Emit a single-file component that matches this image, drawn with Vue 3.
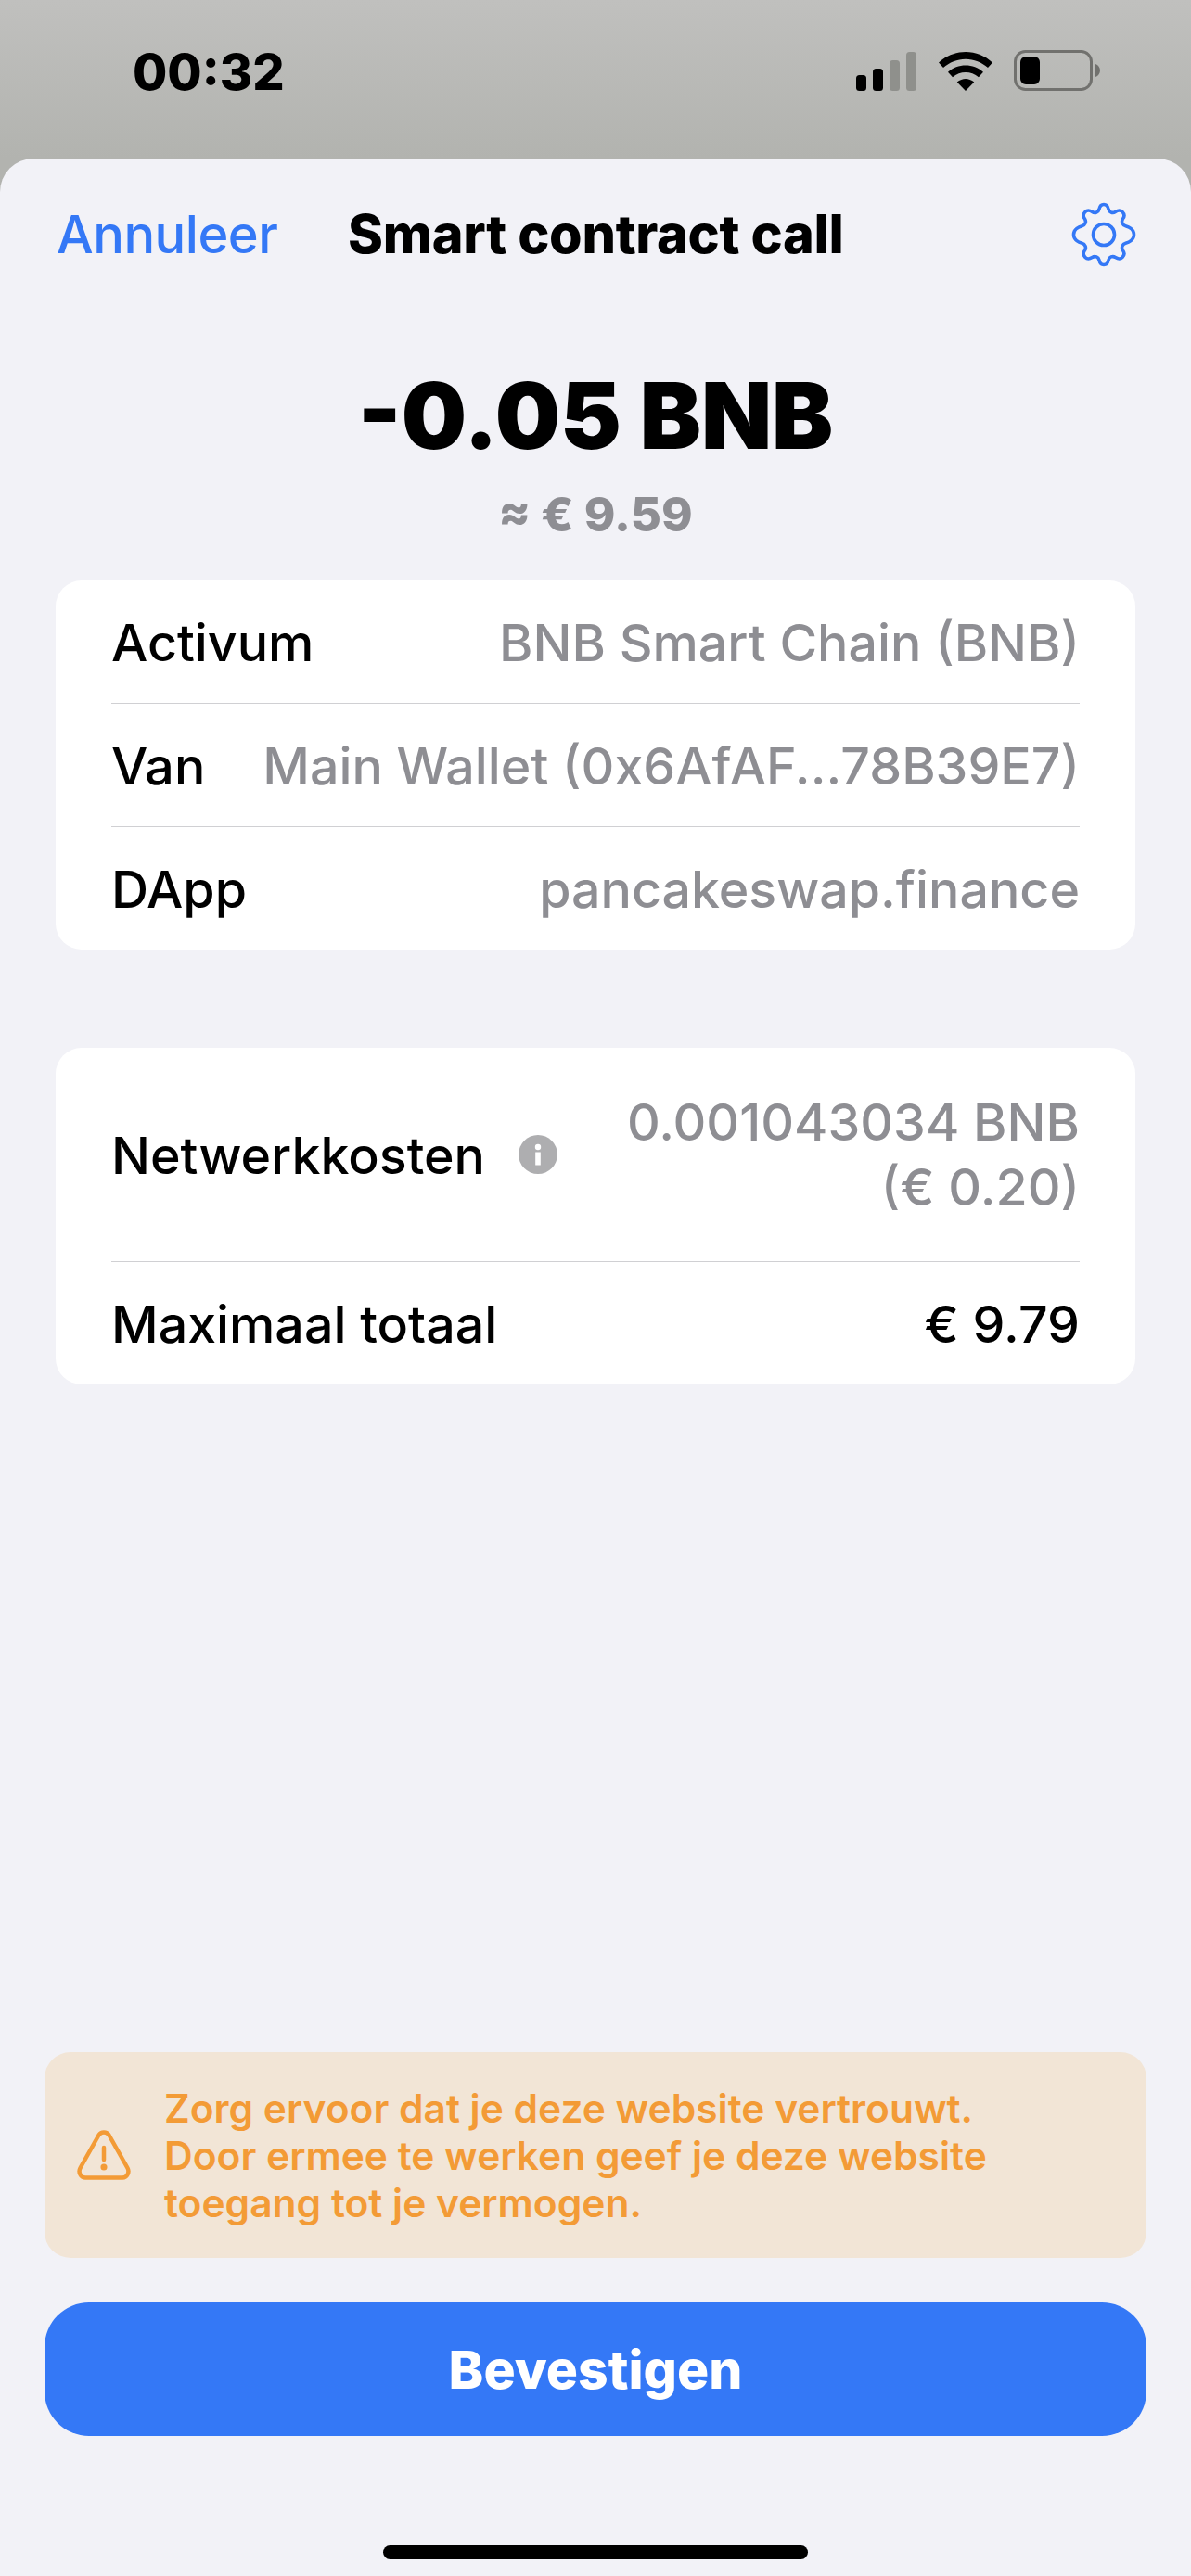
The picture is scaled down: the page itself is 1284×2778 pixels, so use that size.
<script setup>
const assetRows = [
  { label: 'Activum', value: 'BNB Smart Chain (BNB)' },
  { label: 'Van', value: 'Main Wallet (0x6AfAF...78B39E7)' },
  { label: 'DApp', value: 'pancakeswap.finance' },
]
</script>

<template>
  <div class="screen">
    <header class="status">
      <span class="time">00:32</span>
      <div class="status-icons">
        <svg class="signal" width="66" height="42" viewBox="0 0 66 42">
          <rect x="0" y="25" width="11" height="17" rx="3.5" fill="#000" />
          <rect x="18" y="18" width="11" height="24" rx="3.5" fill="#000" />
          <rect x="36" y="9" width="11" height="33" rx="3.5" fill="#8f908c" />
          <rect x="54" y="0" width="11" height="42" rx="3.5" fill="#8f908c" />
        </svg>
        <svg class="wifi" width="58" height="42" viewBox="0 0 58 42">
          <path d="M29 0C18 0 8 4.200 0 11.500L5 17C11.500 11.200 20 7.700 29 7.700S46.500 11.200 53 17L58 11.500C50 4.200 40 0 29 0Z" fill="#000" />
          <path d="M29 14.500C22 14.500 15.500 17 10 21.700L15 27.200C19 23.900 24 22 29 22S39 23.900 43 27.200L48 21.700C42.500 17 36 14.500 29 14.500Z" fill="#000" />
          <path d="M29 29C26 29 22.500 30.200 19.800 32.600L29 42L38.200 32.600C35.500 30.200 32 29 29 29Z" fill="#000" />
        </svg>
        <svg class="battery" width="94" height="44" viewBox="0 0 94 44">
          <rect x="1.500" y="1.500" width="82" height="41" rx="11" fill="none" stroke="#71716e" stroke-width="3" />
          <rect x="7" y="7" width="21" height="30" rx="6" fill="#000" />
          <path d="M88 15C91 16 93 19 93 22S91 28 88 29Z" fill="#71716e" />
        </svg>
      </div>
    </header>

    <main class="sheet">
      <nav class="nav">
        <span class="cancel">Annuleer</span>
        <h1 class="title">Smart contract call</h1>
        <svg class="gear" width="70" height="70" viewBox="0 0 70 70" fill="none" stroke="#3478f6" stroke-width="3.600" stroke-linejoin="round">
          <path d="M35 2.500C38.500 2.500 39.500 5 40 7.500C40.800 11 44.500 12.500 47.500 10.500C49.800 9 52.500 8 55 10.500C57.500 13 57.500 15.500 55.500 18C53.500 21 55 25 58.500 25.800C61.500 26.500 67.500 29 67.500 35C67.500 41 61.500 43.500 58.500 44.200C55 45 53.500 49 55.500 52C57.500 54.500 57.500 57 55 59.500C52.500 62 49.800 61 47.500 59.500C44.500 57.500 40.800 59 40 62.500C39.500 65 38.500 67.500 35 67.500C31.500 67.500 30.500 65 30 62.500C29.200 59 25.500 57.500 22.500 59.500C20.200 61 17.500 62 15 59.500C12.500 57 12.500 54.500 14.500 52C16.500 49 15 45 11.500 44.200C8.500 43.500 2.500 41 2.500 35C2.500 29 8.500 26.500 11.500 25.800C15 25 16.500 21 14.500 18C12.500 15.500 12.500 13 15 10.500C17.500 8 20.200 9 22.500 10.500C25.500 12.500 29.200 11 30 7.500C30.500 5 31.500 2.500 35 2.500Z" />
          <circle cx="35" cy="35" r="11.500" />
        </svg>
      </nav>

      <section class="amount">
        <div class="amount-main">-0.05 BNB</div>
        <div class="amount-fiat">≈ € 9.59</div>
      </section>

      <section class="card">
        <div v-for="row in assetRows" :key="row.label" class="row">
          <span class="label">{{ row.label }}</span>
          <span class="value">{{ row.value }}</span>
        </div>
      </section>

      <section class="card card-fees">
        <div class="row row-fee">
          <span class="label">Netwerkkosten</span>
          <svg class="info" width="42" height="42" viewBox="0 0 42 42">
            <circle cx="21" cy="21" r="21" fill="#aeaeb0" />
            <circle cx="21" cy="13" r="3.200" fill="#fff" />
            <rect x="18.200" y="18.500" width="5.600" height="14" fill="#fff" />
          </svg>
          <span class="value value-fee">0.001043034 BNB<br />(€ 0.20)</span>
        </div>
        <div class="row">
          <span class="label">Maximaal totaal</span>
          <span class="value value-total">€ 9.79</span>
        </div>
      </section>

      <section class="alert">
        <svg class="alert-icon" width="58" height="54" viewBox="0 0 58 54" fill="none" stroke="#f39b36" stroke-width="4.500" stroke-linejoin="round" stroke-linecap="round">
          <path d="M23.500 5.500C26 1.500 32 1.500 34.500 5.500L54.500 41C57 45.500 54 51.500 49 51.500H9C4 51.500 1 45.500 3.500 41Z" />
          <path d="M29 19V32" />
          <circle cx="29" cy="40" r="1.300" fill="#f39b36" />
        </svg>
        <p class="alert-text">Zorg ervoor dat je deze website vertrouwt.<br />Door ermee te werken geef je deze website<br />toegang tot je vermogen.</p>
      </section>

      <button class="confirm" type="button">Bevestigen</button>

      <div class="home-bar"></div>
    </main>
  </div>
</template>

<style>
html, body { margin: 0; padding: 0; background: #f2f2f7; }
</style>

<style scoped>
.screen {
  width: 1284px;
  height: 2778px;
  display: flex;
  flex-direction: column;
  overflow: hidden;
  background: linear-gradient(180deg, #c0c0be 0%, #b2b3af 171px);
  font-family: Inter, "Liberation Sans", sans-serif;
  color: #000;
}
.status {
  height: 171px;
  flex: none;
  box-sizing: border-box;
  padding: 54px 97px 0 143px;
  display: flex;
  justify-content: space-between;
  align-items: flex-start;
}
.time { font-size: 54px; font-weight: 800; line-height: 44px; margin-top: 2px; }
.status-icons { display: flex; align-items: flex-end; gap: 23px; }
.sheet {
  flex: 1;
  display: flex;
  flex-direction: column;
  background: #f2f2f7;
  border-radius: 36px 36px 0 0;
}
.nav {
  height: 164px;
  flex: none;
  box-sizing: border-box;
  padding: 0 59px 0 61px;
  display: flex;
  align-items: center;
}
.cancel { width: 314px; flex: none; font-size: 56px; font-weight: 500; color: #3478f6; letter-spacing: -0.5px; }
.title { margin: 0; flex: 1; font-size: 57.5px; font-weight: 800; line-height: 1; letter-spacing: -0.3px; white-space: nowrap; }
.gear { flex: none; }
.amount { text-align: center; margin-top: 55px; }
.amount-main { font-size: 99px; font-weight: 900; line-height: 116px; }
.amount-fiat { font-size: 51px; font-weight: 800; line-height: 60px; color: #8e8e93; margin-top: 19px; }
.card {
  margin: 41px 60px 0;
  padding: 0 60px;
  background: #fff;
  border-radius: 28px;
}
.card-fees { margin-top: 106px; }
.row {
  height: 132px;
  display: flex;
  align-items: center;
  justify-content: space-between;
  font-size: 55.5px;
  font-weight: 500;
}
.row + .row { border-top: 1px solid #d0d0d3; }
.label { white-space: nowrap; }
.value { color: #8e8e93; text-align: right; white-space: nowrap; }
.row-fee { height: 230px; justify-content: flex-start; }
.info { margin-left: 36px; flex: none; }
.value-fee { margin-left: auto; line-height: 70px; }
.value-total { color: #000; font-weight: 500; }
.alert {
  margin: auto 48px 0;
  height: 222px;
  display: flex;
  align-items: center;
  background: #f2e5d6;
  border-radius: 28px;
  color: #f39b36;
}
.alert-icon { margin-left: 35px; flex: none; }
.alert-text { margin: 0 0 0 36px; font-size: 42.5px; font-weight: 600; line-height: 51px; }
.confirm {
  margin: 48px 48px 0;
  height: 144px;
  flex: none;
  border: none;
  background: #3478f6;
  border-radius: 48px;
  color: #fff;
  font: 800 57px Inter, "Liberation Sans", sans-serif;
}
.home-bar {
  width: 458px;
  height: 15px;
  margin: 118px auto 18px;
  background: #000;
  border-radius: 8px;
}
</style>
